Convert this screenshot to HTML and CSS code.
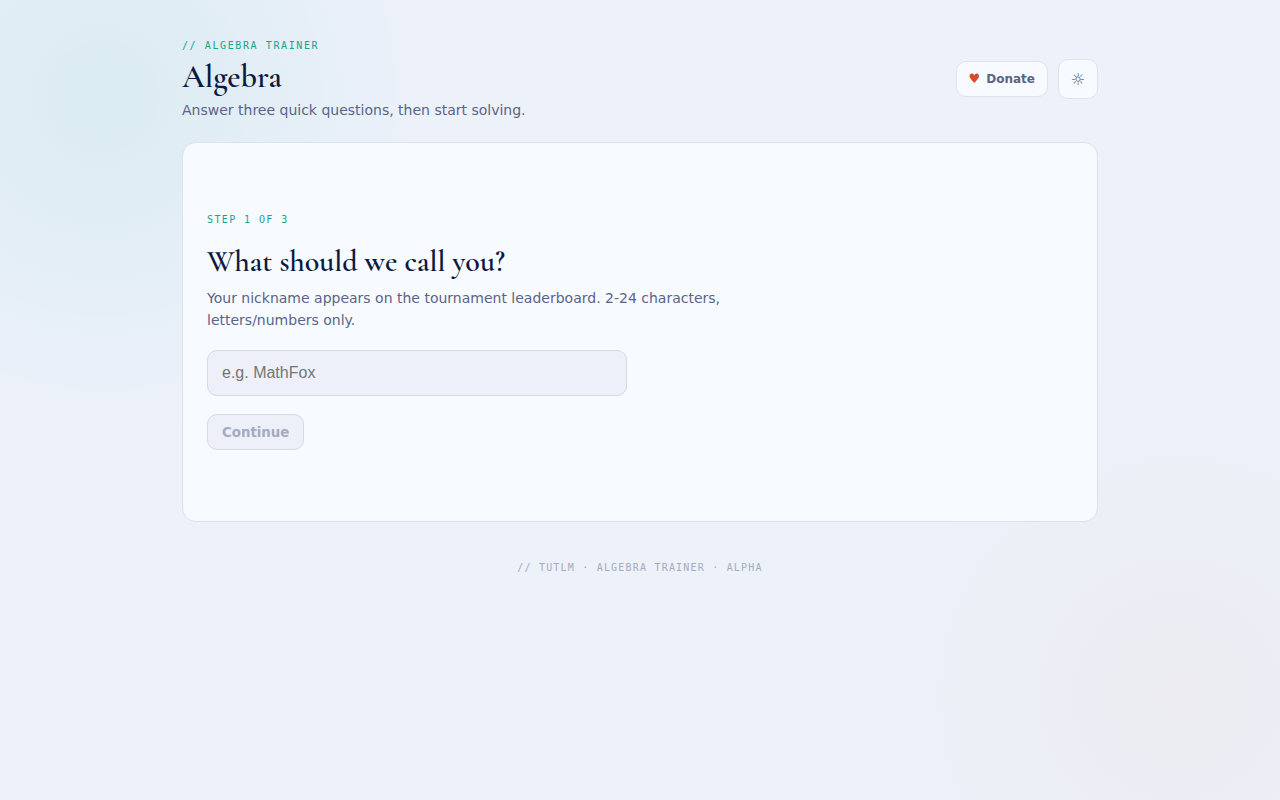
FILE: index.html
```html
<!DOCTYPE html>
<html lang="en">
<head>
    <meta charset="UTF-8">
    <meta name="viewport" content="width=device-width, initial-scale=1.0">
    <title>Algebra Trainer</title>
    <link rel="stylesheet" href="styles.css">
</head>
<body>
    <div class="container">
        <header class="header">
            <div>
                <p class="eyebrow">// Algebra Trainer</p>
                <h1>Algebra</h1>
                <p class="subtitle">Answer three quick questions, then start solving.</p>
            </div>
            <div class="actions">
                <a href="#donate" class="donate"><span class="heart">♥</span>Donate</a>
                <button type="button" class="theme-toggle" aria-label="Toggle theme">☼</button>
            </div>
        </header>

        <main class="card">
            <form class="step">
                <p class="step-label">Step 1 of 3</p>
                <h2><label for="nickname">What should we call you?</label></h2>
                <p class="hint">Your nickname appears on the tournament leaderboard. 2-24 characters, letters/numbers only.</p>
                <input type="text" id="nickname" maxlength="24" placeholder="e.g. MathFox" autocomplete="off">
                <button type="submit" class="continue" disabled>Continue</button>
            </form>
        </main>

        <footer class="footer">// TutLM · Algebra Trainer · Alpha</footer>
    </div>
</body>
</html>
```

FILE: styles.css
```css
* {
    box-sizing: border-box;
}
body {
    margin: 0;
    min-height: 100vh;
    font-family: "DejaVu Sans", sans-serif;
    font-size: 14px;
    line-height: 22px;
    color: #5a6488;
    background:
        radial-gradient(circle at 8% 12%, rgba(0, 170, 150, 0.08), transparent 340px),
        radial-gradient(circle at 92% 87%, rgba(220, 120, 50, 0.04), transparent 340px),
        #edf1fa;
}
h1, h2, p {
    margin: 0;
}
h1, h2 {
    font-family: "Cormorant Garamond", "Liberation Serif", serif;
    font-weight: 600;
    color: #0c1a40;
}
.container {
    max-width: 980px;
    margin: 0 auto;
    padding: 38px 32px;
}
.header {
    display: flex;
    justify-content: space-between;
    align-items: center;
    margin-bottom: 22px;
}
.eyebrow, .step-label, .footer {
    font-family: "DejaVu Sans Mono", monospace;
    font-size: 10px;
    line-height: 16px;
    text-transform: uppercase;
}
.eyebrow, .step-label {
    color: #14a58c;
}
.eyebrow {
    letter-spacing: 0.16em;
}
h1 {
    font-size: 32px;
    line-height: 46px;
}
.subtitle {
    line-height: 20px;
}
.actions {
    display: flex;
    align-items: center;
    gap: 10px;
}
.donate, .theme-toggle {
    display: flex;
    align-items: center;
    justify-content: center;
    background-color: #f7fbff;
    border: 1px solid #dfe3f0;
    border-radius: 10px;
    color: #5a6488;
}
.donate {
    gap: 6px;
    height: 36px;
    padding: 0 12px;
    font-size: 12px;
    font-weight: bold;
    text-decoration: none;
}
.heart {
    color: #d94a2b;
    font-size: 13px;
}
.theme-toggle {
    width: 40px;
    height: 40px;
    padding: 0;
    font-family: inherit;
    font-size: 16px;
    cursor: pointer;
}
.card {
    display: flex;
    align-items: center;
    min-height: 380px;
    padding: 24px;
    background-color: #f7fbff;
    border: 1px solid #dde1ea;
    border-radius: 14px;
}
.step {
    display: flex;
    flex-direction: column;
    align-items: flex-start;
    width: 100%;
    max-width: 520px;
    padding-bottom: 2px;
}
.step-label {
    letter-spacing: 0.14em;
    margin-bottom: 15px;
}
h2 {
    font-size: 30px;
    line-height: 38px;
    margin-bottom: 6px;
}
.hint {
    margin-bottom: 19px;
}
#nickname {
    width: 100%;
    max-width: 420px;
    height: 46px;
    margin-bottom: 18px;
    padding: 0 14px;
    font-family: "Liberation Sans", Arial, sans-serif;
    font-size: 16px;
    color: #0c1a40;
    background-color: #edf0f9;
    border: 1px solid #d5d9e6;
    border-radius: 10px;
}
#nickname::placeholder {
    color: #757575;
}
.continue {
    height: 36px;
    padding: 0 14px;
    font-family: inherit;
    font-weight: bold;
    color: #a4abc2;
    background-color: #edf0f9;
    border: 1px solid #d5d9e6;
    border-radius: 10px;
}
.footer {
    margin-top: 38px;
    text-align: center;
    letter-spacing: 0.12em;
    color: #a4abbc;
}
```
